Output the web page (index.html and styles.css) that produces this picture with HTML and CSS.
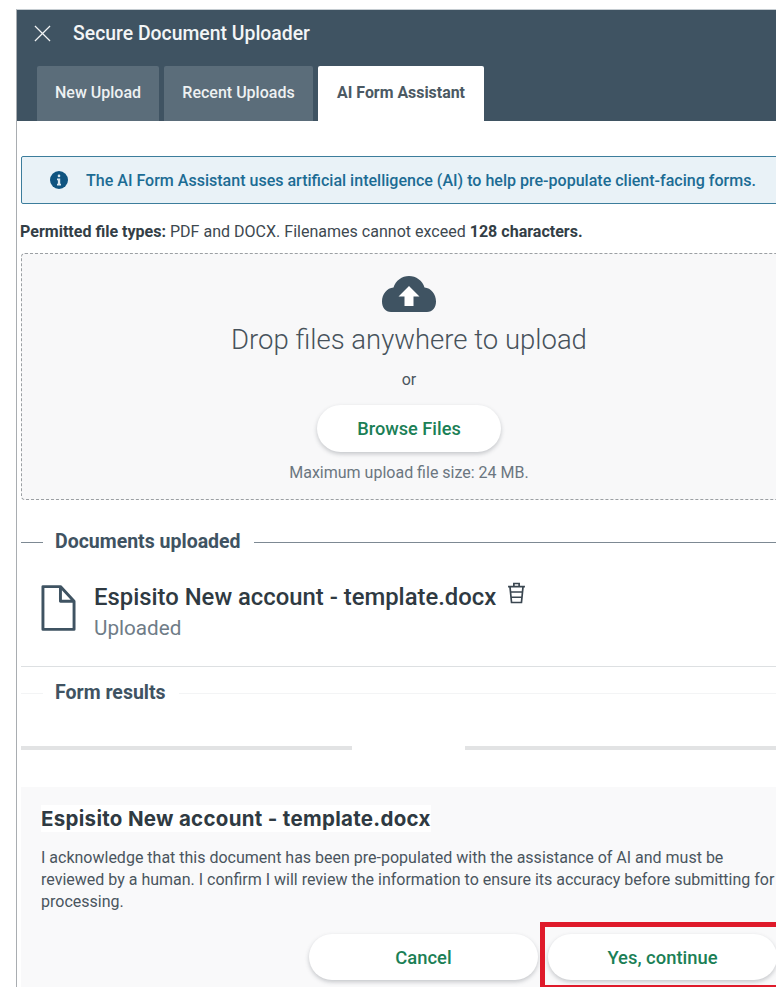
FILE: index.html
```html
<!DOCTYPE html>
<html lang="en">
<head>
<meta charset="utf-8">
<title>Secure Document Uploader</title>
<link rel="stylesheet" href="styles.css">
</head>
<body>
<div class="panel">
  <header class="top">
    <div class="titlebar">
      <svg class="close" viewBox="0 0 18 18" aria-hidden="true"><path d="M1 1l16 16M17 1L1 17"/></svg>
      <span class="title">Secure Document Uploader</span>
    </div>
    <nav class="tabs">
      <a class="tab tab-one">New Upload</a>
      <a class="tab tab-two">Recent Uploads</a>
      <a class="tab tab-active">AI Form Assistant</a>
    </nav>
  </header>
  <main class="content">
    <div class="notice">
      <svg class="notice-icon" viewBox="0 0 18 18" aria-hidden="true"><circle cx="9" cy="9" r="9"/><rect x="7.7" y="3.6" width="2.6" height="2.6" rx="1.3" class="glyph"/><path class="glyph" d="M7 7.6h3.2v5.2H11v1.6H7v-1.6h.9V9.2H7z"/></svg>
      <span>The AI Form Assistant uses artificial intelligence (AI) to help pre-populate client-facing forms.</span>
    </div>
    <p class="permitted"><b>Permitted file types:</b> PDF and DOCX. Filenames cannot exceed <b>128 characters.</b></p>
    <section class="dropzone">
      <svg class="cloud" viewBox="0 0 54 36" aria-hidden="true"><path d="M9 36C3.500 36 0 31.500 0 25.500 0 18 5 12 11.500 11.500 13.500 4.500 20 0 27 0s13.500 4.500 15.500 11.500C49 12 54 18 54 25.500 54 31.500 50.500 36 45 36z"/><path class="arrow" d="M27 10l10.500 10.500h-6V30h-9v-9.500h-6z"/></svg>
      <h2 class="drop-title">Drop files anywhere to upload</h2>
      <div class="drop-or">or</div>
      <button class="pill browse">Browse Files</button>
      <div class="drop-limit">Maximum upload file size: 24 MB.</div>
    </section>
    <div class="legend legend-docs"><span>Documents uploaded</span></div>
    <div class="file">
      <svg class="file-icon" viewBox="0 0 36 48" aria-hidden="true"><path d="M2 2h18l14 15v29H2zM20 2v15h14"/></svg>
      <div class="file-text">
        <div class="file-name">Espisito New account - template.docx
          <svg class="trash" viewBox="0 0 18 22" aria-hidden="true"><path d="M1 5.500h16M6.500 5V2.500h5V5M2.800 5.500l1.500 15h9.400l1.500-15M3.700 10.500h10.600M4.200 15.500h9.600"/></svg>
        </div>
        <div class="file-status">Uploaded</div>
      </div>
    </div>
    <div class="legend legend-results"><span>Form results</span></div>
    <div class="progress"><i class="bar bar-a"></i><i class="bar bar-b"></i></div>
    <section class="ack">
      <h3 class="ack-title"><span>Espisito New account - template.docx</span></h3>
      <p class="ack-text">I acknowledge that this document has been pre-populated with the assistance of AI and must be reviewed by a human. I confirm I will review the information to ensure its accuracy before submitting for processing.</p>
      <div class="ack-actions">
        <button class="pill action">Cancel</button>
        <button class="pill action">Yes, continue</button>
      </div>
    </section>
  </main>
  <div class="callout"></div>
</div>
</body>
</html>
```
FILE: styles.css
```css
* { box-sizing: border-box; }
html, body { margin: 0; height: 100%; overflow: hidden; background: #fff; }
body { font-family: Roboto, "Liberation Sans", sans-serif; color: #3a4650; padding: 9px 0 0 16px; }

.panel { position: relative; width: 760px; height: 978px; overflow: hidden; border-left: 1px solid #a9adb1; border-top: 1px solid #c5ccd1; }

/* Header and tabs */
.top { background: #3f5362; height: 111px; display: flex; flex-direction: column; }
.titlebar { height: 56px; flex: none; display: flex; align-items: center; padding: 0 0 10px 17px; color: #fff; }
.close { width: 17px; height: 17px; fill: none; stroke: #f2f4f5; stroke-width: 1.3; }
.title { margin-left: 22px; font-size: 19.400px; font-weight: 500; color: #f3f5f6; white-space: nowrap; }
.tabs { display: flex; gap: 5px; padding-left: 20px; flex: 1; }
.tab { display: flex; align-items: center; justify-content: center; padding-bottom: 2px; background: #5b6d7a; color: #eef1f2; font-size: 16px; font-weight: 500; border-radius: 2px 2px 0 0; }
.tab-one { width: 122px; }
.tab-two { width: 149px; }
.tab-active { width: 166px; background: #fff; color: #4b5963; font-size: 15.900px; font-weight: 700; }

/* Notice and file type line */
.content { width: 780px; padding: 35px 0 0 4px; }
.notice { height: 48px; display: flex; align-items: center; padding-left: 28px; background: #e9f2f7; border: 1px solid #3c7d9c; border-radius: 2px; color: #1c6c94; font-size: 16.050px; font-weight: 500; white-space: nowrap; }
.notice-icon { width: 18px; height: 18px; margin-right: 18px; fill: #0f5480; flex: none; }
.notice-icon .glyph { fill: #d9e6ee; }
.permitted { margin: 19px 0 0 -1px; font-size: 16.050px; line-height: 18px; color: #3d4850; white-space: nowrap; }
.permitted b { font-weight: 700; color: #333e46; }

/* Upload drop area */
.dropzone { margin-top: 12px; height: 247px; display: flex; flex-direction: column; align-items: center; background: #f8f8f9; border: 1px dashed #9b9fa3; border-radius: 4px; padding-top: 22px; }
.cloud { width: 54px; height: 36px; fill: #3f5362; flex: none; }
.cloud .arrow { fill: #fff; }
.drop-title { margin: 10px 0 0; font-size: 27.500px; line-height: 36px; font-weight: 300; color: #47525b; }
.drop-or { margin-top: 12px; font-size: 16px; line-height: 20px; color: #4b565f; }
.pill { border: 0; border-radius: 24px; background: #fff; color: #1b7f56; font-family: inherit; font-weight: 500; box-shadow: 0 2px 4px rgba(60, 70, 80, .28); }
.browse { margin-top: 15px; width: 184px; height: 47px; font-size: 18.200px; flex: none; }
.drop-limit { margin-top: 11px; font-size: 16px; line-height: 20px; color: #6b7680; }

/* Section legends */
.legend { display: flex; align-items: center; font-size: 19.500px; line-height: 24px; font-weight: 700; color: #3f5362; }
.legend span { padding: 0 13px 0 34px; position: relative; background: #fff; }
.legend::after { content: ""; flex: 1; height: 1px; background: #7d8993; }
.legend span::before { content: ""; position: absolute; left: 0; top: 12px; width: 22px; height: 1px; background: #7d8993; }
.legend-docs { margin-top: 30px; }
.legend-results { margin-top: 14px; }
.legend-results::after, .legend-results span::before { background: #f3f4f5; }

/* Uploaded file row */
.file { display: flex; height: 113px; padding: 29px 0 0 20px; border-bottom: 1px solid #dde0e2; }
.file-icon { width: 35px; height: 48px; fill: none; stroke: #3f5362; stroke-width: 3; stroke-linejoin: round; flex: none; margin-top: 1px; }
.file-text { margin-left: 18px; }
.file-name { display: flex; align-items: flex-start; font-size: 23.850px; line-height: 28px; font-weight: 500; color: #2f3a42; white-space: nowrap; }
.trash { width: 19px; height: 25px; margin: -3px 0 0 11px; fill: none; stroke: #3a4650; stroke-width: 1.600; }
.file-status { font-size: 20.700px; line-height: 28px; margin-top: 3px; color: #6f7c87; }

/* Progress segments */
.progress { display: flex; margin-top: 41px; height: 4px; }
.bar { display: block; height: 3.500px; background: #e2e3e4; flex: none; }
.bar-a { width: 331px; }
.bar-b { width: 400px; margin-left: 113px; }

/* Acknowledgement card */
.ack { margin-top: 37px; height: 210px; background: #f9f9fa; padding: 18px 0 0 20px; }
.ack-title { margin: 0; font-size: 20.500px; line-height: 27px; font-weight: 700; letter-spacing: .3px; color: #2f3a42; font-family: Inter, Roboto, sans-serif; }
.ack-title span { background: #fff; display: inline-block; }
.ack-text { margin: 15px 0 0; width: 738px; font-size: 16px; line-height: 22px; color: #4a555e; }
.ack-actions { display: flex; margin-top: 21px; margin-left: 268px; gap: 10px; }
.action { width: 229px; height: 46px; font-size: 18.400px; flex: none; }

/* Highlight frame drawn around the confirm button */
.callout { position: absolute; left: 523px; top: 912px; width: 260px; height: 68px; border: 5px solid #df1a2a; }
```
